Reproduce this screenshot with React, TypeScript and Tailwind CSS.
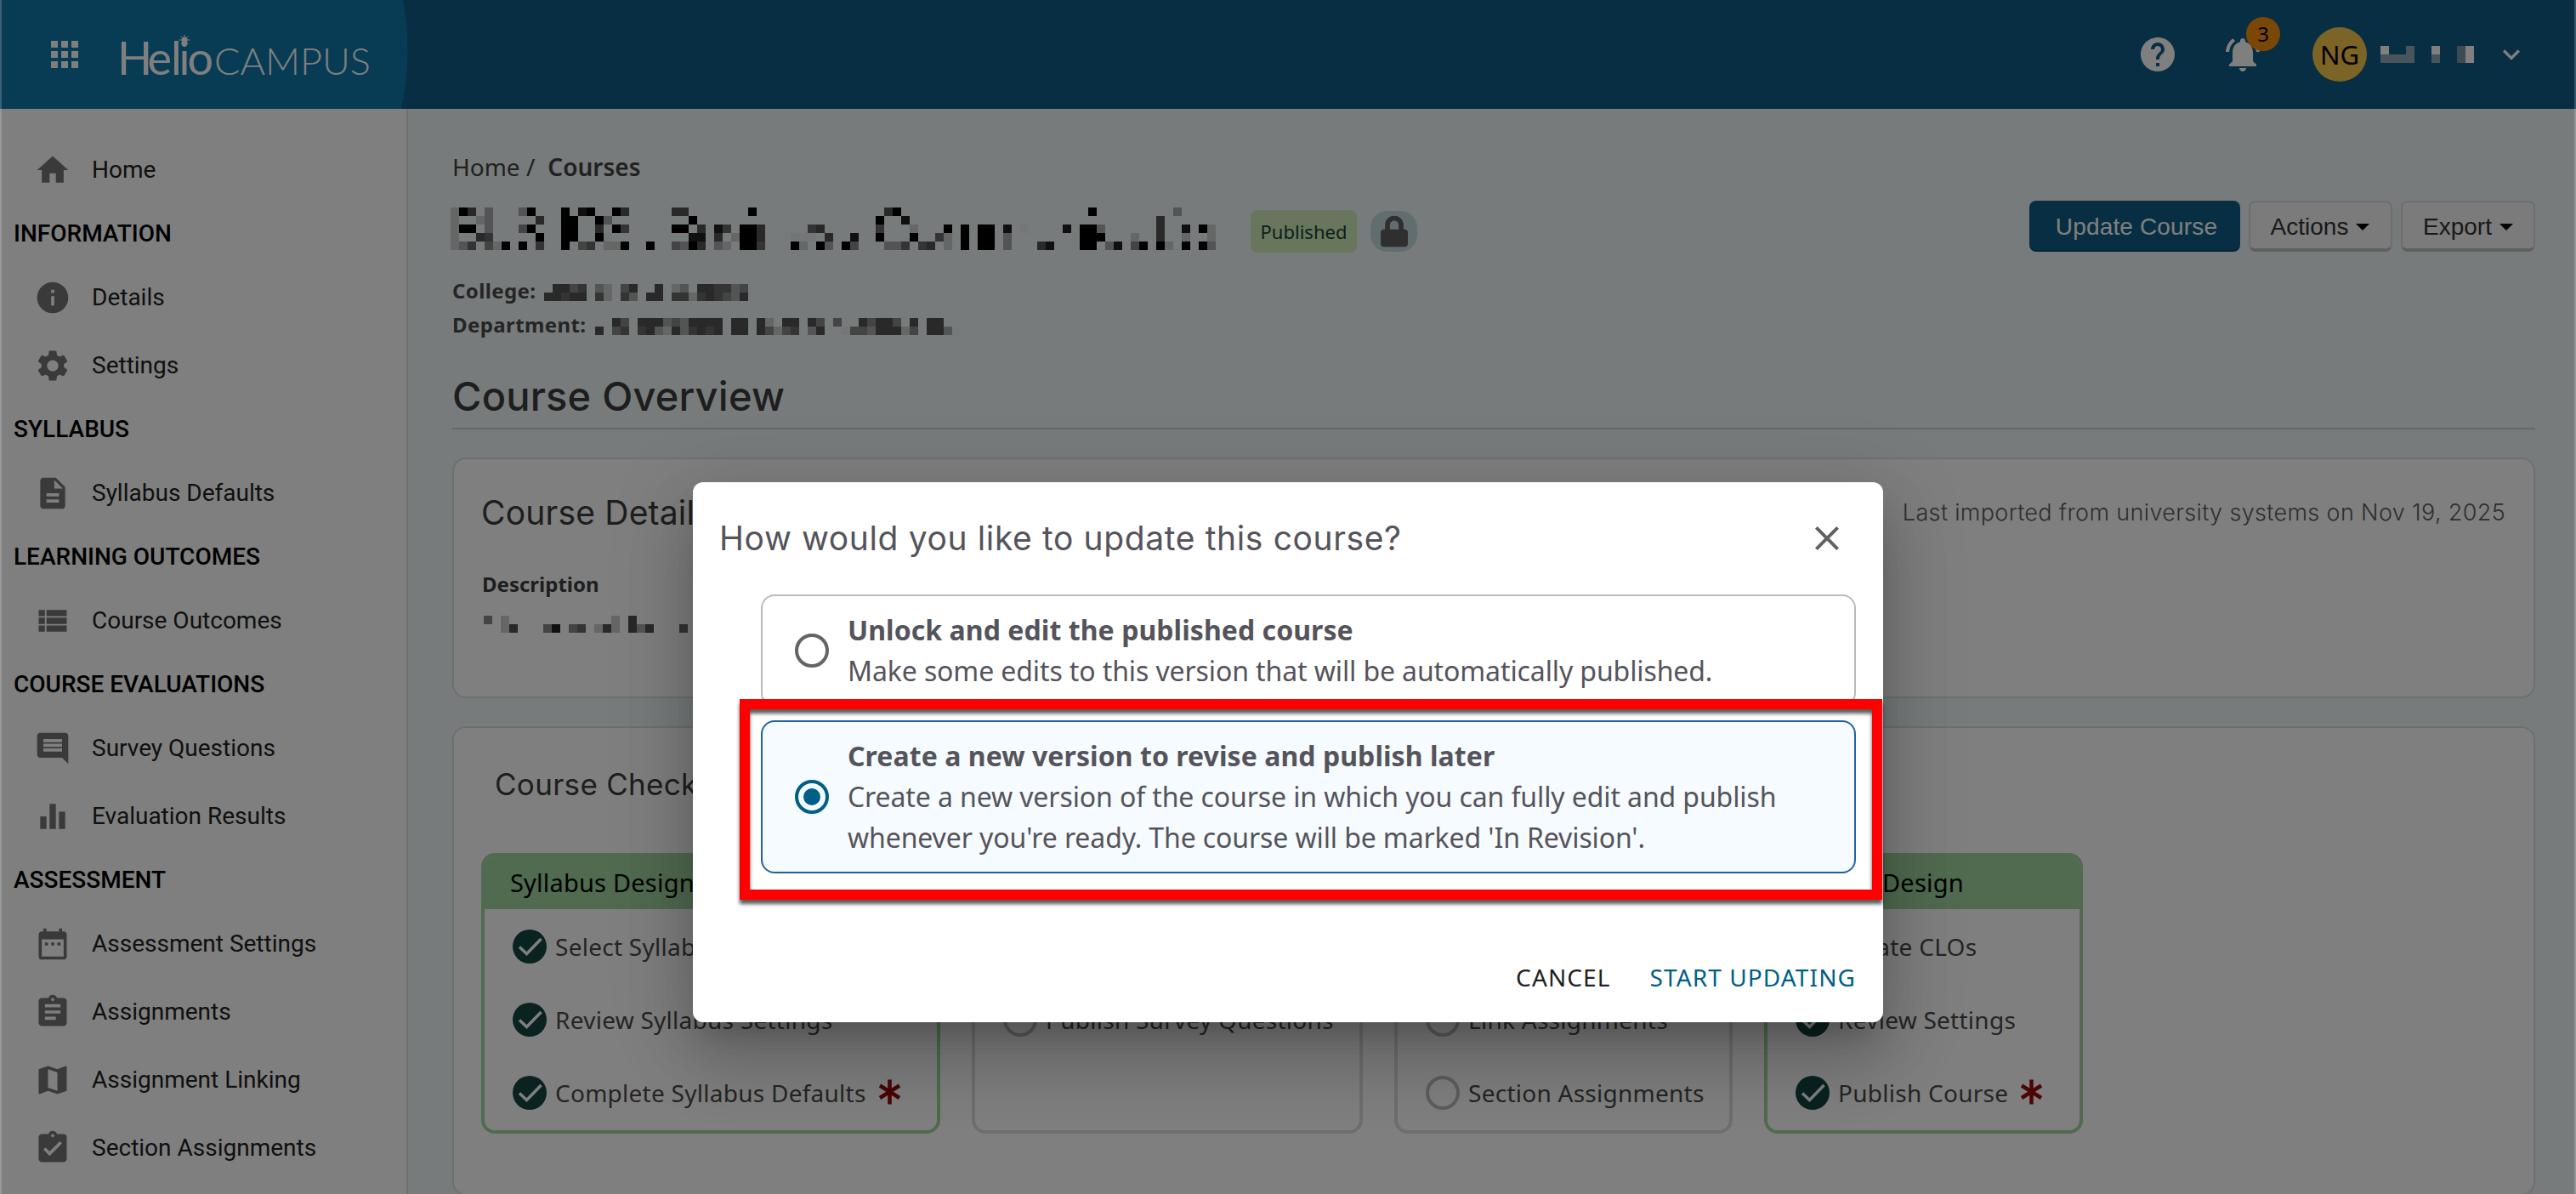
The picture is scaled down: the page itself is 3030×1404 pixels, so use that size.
import type { IconType } from "react-icons";
import {
    MdApps, MdAssignment, MdAssignmentTurnedIn, MdClose, MdComment, MdDateRange, MdDescription, MdEqualizer,
    MdExpandMore, MdHelp, MdHome, MdInfo, MdMap, MdNotificationsActive, MdSettings, MdViewList,
} from "react-icons/md";
import { FaLock } from "react-icons/fa";
import clsx from "clsx";

type NavItem = { label: string; icon: IconType };
type NavSection = { title?: string; items: NavItem[] };

const navSections: NavSection[] = [
    { items: [{ label: "Home", icon: MdHome }] },
    {
        title: "INFORMATION",
        items: [
            { label: "Details", icon: MdInfo },
            { label: "Settings", icon: MdSettings },
        ],
    },
    { title: "SYLLABUS", items: [{ label: "Syllabus Defaults", icon: MdDescription }] },
    { title: "LEARNING OUTCOMES", items: [{ label: "Course Outcomes", icon: MdViewList }] },
    {
        title: "COURSE EVALUATIONS",
        items: [
            { label: "Survey Questions", icon: MdComment },
            { label: "Evaluation Results", icon: MdEqualizer },
        ],
    },
    {
        title: "ASSESSMENT",
        items: [
            { label: "Assessment Settings", icon: MdDateRange },
            { label: "Assignments", icon: MdAssignment },
            { label: "Assignment Linking", icon: MdMap },
            { label: "Section Assignments", icon: MdAssignmentTurnedIn },
        ],
    },
];

type Step = { label: string; done?: boolean; required?: boolean };
type Column = { title: string; done: boolean; width: string; steps: Step[] };

const columns: Column[] = [
    {
        title: "Syllabus Design",
        done: true,
        width: "w-[540px]",
        steps: [
            { label: "Select Syllabus", done: true },
            { label: "Review Syllabus Settings", done: true },
            { label: "Complete Syllabus Defaults", done: true, required: true },
        ],
    },
    {
        title: "Survey Design",
        done: false,
        width: "w-[460px]",
        steps: [{ label: "Add Questions" }, { label: "Publish Survey Questions" }],
    },
    {
        title: "Assessment",
        done: false,
        width: "w-[398px]",
        steps: [{ label: "Add Assignments" }, { label: "Link Assignments" }, { label: "Section Assignments" }],
    },
    {
        title: "Course Design",
        done: true,
        width: "w-[375px]",
        steps: [
            { label: "Create CLOs", done: true },
            { label: "Review Settings", done: true },
            { label: "Publish Course", done: true, required: true },
        ],
    },
];

// Redacted values: one character per 10px cell, "." is an empty cell
const redactedTitle = [
    "602.5...50...0.10..02.....22.......0...............20......................0.........5....",
    "6..65.....2..00..05.........0.....................0..1.............................2......",
    "600.5...40...00..2.03.....00.2.13.002.....32......3...6...0.0.00.1.7....1.005......2..1.06",
    "6..23.....0..00..07.........11.2.6002...777.2..1..0...0..36.0.00.5........000...6..2..6..6",
    "653.460.0.3..0.43.660..0..4502.56.003...06.05.04...553.32.6.0.00.5...21...00.51.40.06.0.05",
];
const redactedCollege = [".2243.56.42..2.65.223354", "22322.36.35.22.336323452"];
const redactedDepartment = [
    "..24.2225452222.22.26.22.24.4..24224.2.22.",
    "2.43.3256253232.22.24643.52..744522264.225",
];
const redactedDescription = ["4.6............6.2......", "..62...41.43.626.252...3"];
const redactedUser = ["a..b..a..ca", "bbbb..b..ca"];

const shades: Record<string, string> = {
    "0": "#000000",
    "1": "#202022",
    "2": "#525254",
    "3": "#69696b",
    "4": "#88888a",
    "5": "#a6a8aa",
    "6": "#cacccd",
    "7": "#e9efef",
    a: "#ffffff",
    b: "#90aaba",
    c: "#7a93a6",
};

const Redacted = ({ rows, className }: { rows: string[]; className?: string }) => (
    <svg width={rows[0].length * 10} height={rows.length * 10} shapeRendering="crispEdges" className={clsx("shrink-0", className)}>
        {rows.map((row, y) =>
            row.split("").map((cell, x) =>
                cell === "." ? null : <rect key={`${x}-${y}`} x={x * 10} y={y * 10} width={10} height={10} fill={shades[cell]} />
            )
        )}
    </svg>
);

const Logo = () => (
    <svg width="310" height="80" viewBox="0 0 310 80" className="ml-[38px] shrink-0 overflow-visible text-white" fill="currentColor">
        <text x="0 35.500 63 72.500 82.500" y="64" fontFamily="Lato, sans-serif" fontSize="54" fontWeight="400">
            Helio
        </text>
        <text x="114" y="64" fontFamily="Lato, sans-serif" fontSize="43" fontWeight="300" textLength="184" lengthAdjust="spacingAndGlyphs">
            CAMPUS
        </text>
        <circle cx="79" cy="23" r="3.500" />
        <path d="M79 16.500v13M72.500 23h13M74.500 18.500l9 9M83.500 18.500l-9 9" stroke="currentColor" strokeWidth="1" />
    </svg>
);

const Header = () => (
    <header className="relative flex h-32 shrink-0 items-center bg-[#0e5c84]">
        <svg width="482" height="128" className="absolute left-0 top-0">
            <path d="M0 0H474Q486 64 472 128H0Z" fill="#1076a8" />
        </svg>
        <div className="relative flex items-center pl-[52px]">
            <MdApps className="h-12 w-12 text-white" />
            <Logo />
        </div>
        <div className="relative ml-auto flex items-center pr-[56px] text-white">
            <MdHelp className="h-12 w-12" />
            <div className="relative ml-[52px]">
                <MdNotificationsActive className="h-12 w-12" />
                <span className="absolute -top-5 left-7 flex h-10 w-10 items-center justify-center rounded-full bg-[#f68e0e] font-['Noto_Sans',sans-serif] text-[24px] text-black">
                    3
                </span>
            </div>
            <div className="ml-[58px] flex h-16 w-16 items-center justify-center rounded-full bg-[#f8c64c] font-['Noto_Sans',sans-serif] text-[31px] text-black">
                NG
            </div>
            <Redacted rows={redactedUser} className="ml-4" />
            <MdExpandMore className="ml-6 h-10 w-10" />
        </div>
    </header>
);

const Sidebar = () => (
    <nav className="w-[480px] shrink-0 border-r-2 border-[#dedede] bg-white pt-[31px] font-['Roboto',sans-serif] text-[28px]">
        {navSections.map((section, i) => (
            <div key={i}>
                {section.title && <h2 className="pl-4 pt-px font-medium leading-[69px] text-black">{section.title}</h2>}
                {section.items.map(({ label, icon: Icon }) => (
                    <a key={label} className="flex h-20 items-center pl-10 text-[#212121]">
                        <Icon className="mt-0.5 h-11 w-11 text-[#757575]" />
                        <span className="ml-6 pt-px">{label}</span>
                    </a>
                ))}
            </div>
        ))}
    </nav>
);

const Caret = () => <span className="ml-[9px] border-x-8 border-t-8 border-x-transparent border-t-black" />;

const Asterisk = () => (
    <svg width="27" height="30" viewBox="0 0 27 30" className="-mt-0.5 ml-[14px]" stroke="#960a0a" strokeWidth="4.500" fill="none">
        <path d="M13.500 0.500v29M2 7.500l23 14.500M25 7.500l-23 14.500" />
    </svg>
);

const StepIcon = ({ done }: { done?: boolean }) =>
    done ? (
        <svg width="40" height="40" viewBox="0 0 40 40" className="shrink-0">
            <circle cx="20" cy="20" r="20" fill="#144640" />
            <path d="M8 20.500l8.500 8L33.500 11" fill="none" stroke="#fff" strokeWidth="3.500" />
        </svg>
    ) : (
        <span className="h-10 w-10 shrink-0 rounded-full border-4 border-[#bdbdbd]" />
    );

const ChecklistColumn = ({ column }: { column: Column }) => (
    <div
        className={clsx(
            "h-[330px] shrink-0 overflow-hidden rounded-2xl border-4 bg-white",
            column.done ? "border-[#a0d6a0]" : "border-[#dcdcdc]",
            column.width
        )}
    >
        <h4
            className={clsx(
                "h-[62px] pl-[30px] text-[29px] leading-[61px] tracking-[0.2px] text-black",
                column.done ? "bg-[#a0d6a0]" : "bg-[#dcdcdc]"
            )}
        >
            {column.title}
        </h4>
        <ul className="pt-px">
            {column.steps.map((step) => (
                <li key={step.label} className="flex h-[86px] items-center whitespace-nowrap pl-[33px] text-[28px] tracking-[0.26px] text-[#4a4a4a]">
                    <StepIcon done={step.done} />
                    <span className="ml-[10px]">{step.label}</span>
                    {step.required && <Asterisk />}
                </li>
            ))}
        </ul>
    </div>
);

const CoursePage = () => (
    <main className="flex-1 bg-[#eff6f7] pl-[52px] pr-12 pt-12 font-['Noto_Sans',sans-serif] text-[#424242]">
        <div className="flex h-10 items-center text-[28px]">
            <span>Home /</span>
            <span className="ml-[15px] font-semibold">Courses</span>
        </div>

        <div className="mt-5 flex h-[60px] items-start">
            <Redacted rows={redactedTitle} className="-ml-0.5 mt-2" />
            <span className="ml-[41px] mt-[11px] flex h-[50px] w-[125px] items-center justify-center rounded-lg bg-[#d1ecb8] text-[22px] text-[#123f38]">
                Published
            </span>
            <span className="ml-4 mt-3 flex h-12 w-[55px] items-center justify-center rounded-[20px] bg-[#c5dae0]">
                <FaLock className="h-[38px] w-8 text-[#5e5e5e]" />
            </span>
            <div className="ml-auto flex gap-[10px] font-['Liberation_Sans',sans-serif] text-[28px]">
                <button className="h-[60px] w-[248px] rounded-lg border-b-2 border-[#0b4d70] bg-[#0e5c84] pl-1 pt-[3px] tracking-[0.15px] text-white">
                    Update Course
                </button>
                <button className="flex h-[60px] w-[169px] items-center justify-center rounded-lg border-2 border-b-4 border-[#dcdcdc] border-b-[#c0c0c0] bg-[#f6f6f6] pr-px pt-[3px] text-[#333]">
                    Actions <Caret />
                </button>
                <button className="flex h-[60px] w-[158px] items-center justify-center rounded-lg border-2 border-b-4 border-[#dcdcdc] border-b-[#c0c0c0] bg-[#f6f6f6] pt-[3px] text-[#333]">
                    Export <Caret />
                </button>
            </div>
        </div>

        <div className="mt-7 text-[24px] font-bold tracking-[0.4px] text-[#4a4a4c]">
            <div className="flex h-10 items-center">
                <span className="w-[108px] pb-[5px]">College:</span>
                <Redacted rows={redactedCollege} />
            </div>
            <div className="flex h-10 items-center">
                <span className="w-[168px] pb-[5px]">Department:</span>
                <Redacted rows={redactedDepartment} />
            </div>
        </div>

        <h1 className="mt-6 border-b-2 border-[#cbd0d1] font-['Inter',sans-serif] text-[47px] font-medium leading-[75px] tracking-[0.2px] text-[#3c3c3e]">
            Course Overview
        </h1>

        <section className="mt-[33px] h-[283px] rounded-2xl border-2 border-[#dedede] bg-white px-[33px]">
            <div className="flex h-[126px] items-center justify-between font-['Inter',sans-serif]">
                <h2 className="-ml-px text-[39px] tracking-[0.2px] text-[#3c3c3e]">Course Details</h2>
                <span className="text-[27px] font-light tracking-[0.34px] text-[#5c5c5e]">Last imported from university systems on Nov 19, 2025</span>
            </div>
            <h3 className="text-[24px] font-bold leading-[41px] text-[#3c3c3e]">Description</h3>
            <Redacted rows={redactedDescription} className="ml-0.5 mt-[17px]" />
        </section>

        <section className="mt-[33px] h-[552px] rounded-2xl border-2 border-[#dedede] bg-white pl-8">
            <h2 className="pl-4 font-['Inter',sans-serif] text-[35px] leading-[132px] tracking-[0.3px] text-[#3c3c3e]">Course Checklist</h2>
            <div className="mt-[15px] flex gap-[37px]">
                {columns.map((column) => (
                    <ChecklistColumn key={column.title} column={column} />
                ))}
            </div>
        </section>
    </main>
);

type OptionProps = { title: string; text: string; selected?: boolean };

const UpdateOption = ({ title, text, selected }: OptionProps) => (
    <label
        className={clsx(
            "flex items-center rounded-2xl border-2 py-4 pl-[38px] pr-16 text-[32px] leading-[48px]",
            selected ? "border-[#1f62a3] bg-[#f5fbff]" : "border-[#bababa] bg-white"
        )}
    >
        <span
            className={clsx(
                "flex h-10 w-10 shrink-0 items-center justify-center rounded-full border-4",
                selected ? "border-[#005f87]" : "border-[#646464]"
            )}
        >
            {selected && <span className="h-5 w-5 rounded-full bg-[#005f87]" />}
        </span>
        <span className="ml-[22px] tracking-[-0.11px]">
            <strong className="block font-bold tracking-[0.06px]">{title}</strong>
            {text}
        </span>
    </label>
);

const UpdateDialog = () => (
    <div
        role="dialog"
        className="relative h-[635px] w-[1400px] rounded-xl bg-white font-['Noto_Sans',sans-serif] text-[#55535b] shadow-[0_22px_30px_-14px_rgba(0,0,0,0.2),0_48px_76px_6px_rgba(0,0,0,0.14),0_18px_92px_16px_rgba(0,0,0,0.12)]"
    >
        <div className="flex h-[132px] items-center justify-between pl-[31px] pr-[42px]">
            <h2 className="font-['Inter',sans-serif] text-[39px] tracking-[0.62px]">How would you like to update this course?</h2>
            <MdClose className="h-12 w-12 text-[#616161]" />
        </div>
        <div className="flex flex-col gap-4 pl-20 pr-8">
            <UpdateOption
                title="Unlock and edit the published course"
                text="Make some edits to this version that will be automatically published."
            />
            <UpdateOption
                selected
                title="Create a new version to revise and publish later"
                text="Create a new version of the course in which you can fully edit and publish whenever you're ready. The course will be marked 'In Revision'."
            />
        </div>
        <div className="mt-[92px] flex h-[60px] items-center justify-end gap-[46px] pr-8 text-[28px] tracking-[1.1px]">
            <button className="text-[#212121]">CANCEL</button>
            <button className="text-[#005f87]">START UPDATING</button>
        </div>

        {/* callout around the selected option */}
        <div className="absolute left-[55px] top-[255px] h-[236px] w-[1344px] border-[12px] border-[#ff0000] drop-shadow-[0_5px_2px_rgba(0,0,0,0.65)]" />
    </div>
);

const App = () => (
    <div className="relative flex h-[1404px] w-[3030px] flex-col overflow-hidden">
        <Header />
        <div className="flex flex-1">
            <Sidebar />
            <CoursePage />
        </div>
        <div className="absolute inset-0 flex items-start justify-center border-x-2 border-white/20 bg-black/50 pt-[567px]">
            <UpdateDialog />
        </div>
    </div>
);

export default App;
